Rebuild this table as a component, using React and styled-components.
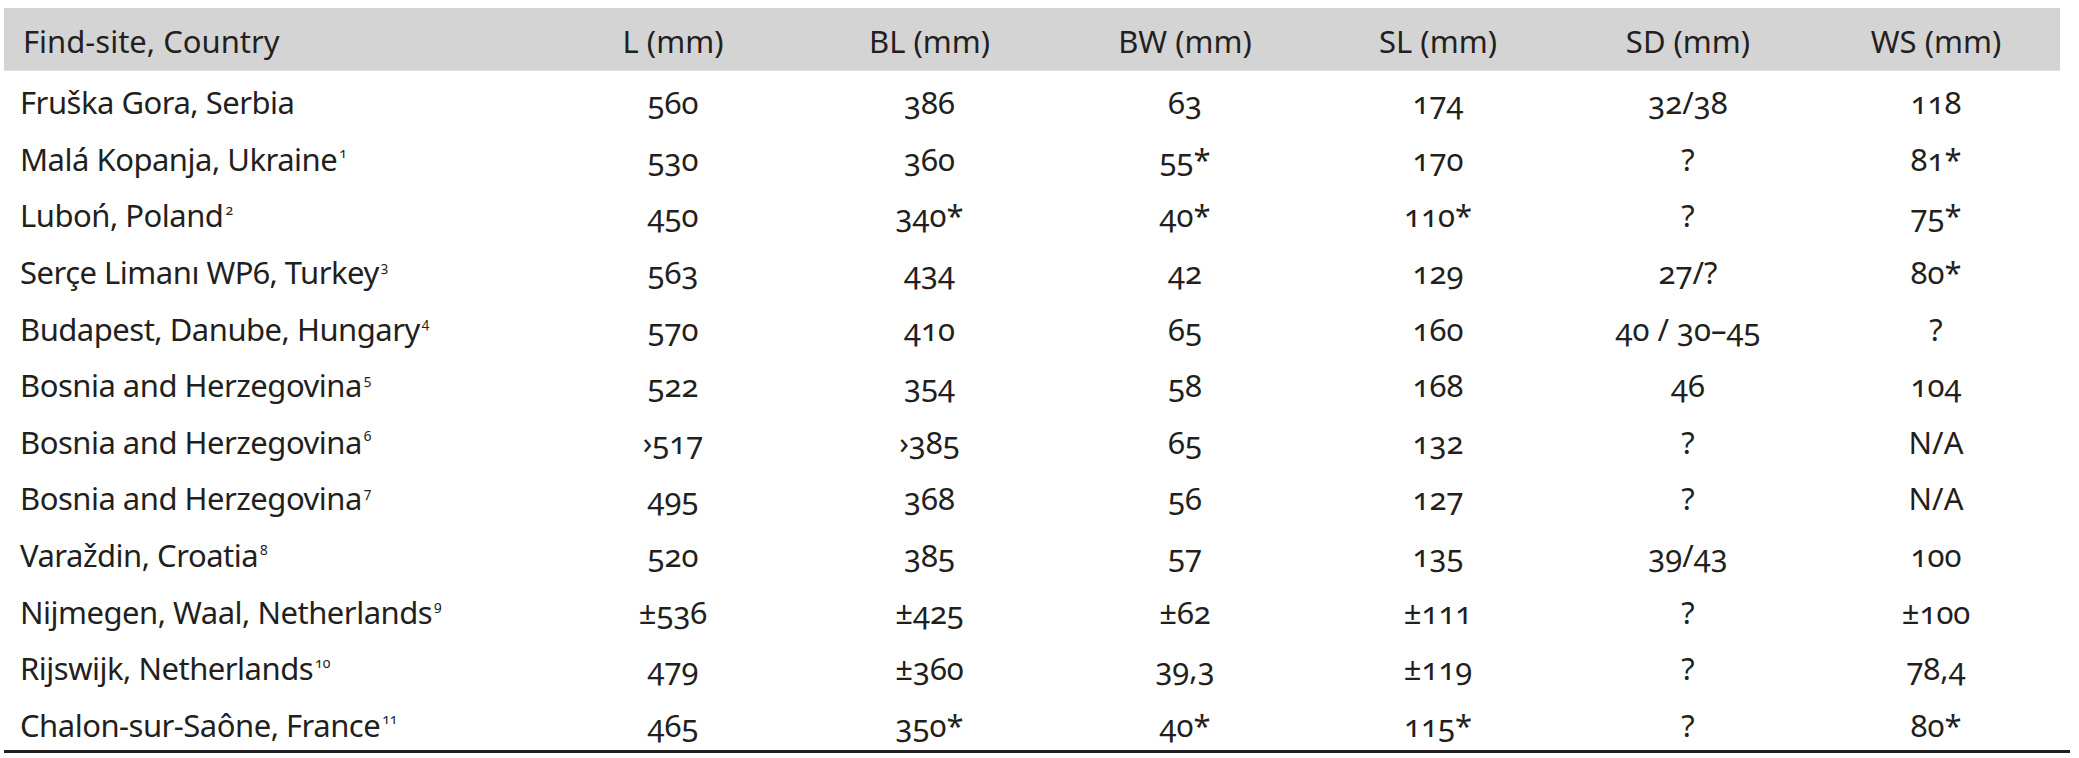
import React from "react";
import styled, { createGlobalStyle } from "styled-components";

const Global = createGlobalStyle`
  html, body { margin: 0; padding: 0; background: #ffffff; }
  body { font-family: "Noto Sans", "Lato", sans-serif; color: #231f20; }
`;

const Page = styled.div`
  padding: 8px 9px 0 4px;
  width: 2066px;
`;

const Table = styled.div`
  display: grid;
  grid-template-columns: 541px 256px 257px 254px 252px 248px 248px;
  border-bottom: 3px solid #231f20;
  font-family: "Noto Sans", "Lato", sans-serif;
  font-size: 31px;
  font-variant-numeric: oldstyle-nums;
  font-feature-settings: "onum" 1;
`;

const HeadCell = styled.div`
  height: 63px;
  display: flex;
  align-items: center;
  justify-content: ${(p) => (p.$first ? "flex-start" : "center")};
  padding-left: ${(p) => (p.$first ? "19px" : "0")};
  padding-top: 4px;
  box-sizing: border-box;
  background: #d4d4d4;
  border-bottom: 1px solid #e2e2e2;
  white-space: nowrap;
`;

const Cell = styled.div`
  height: 56.6px;
  display: flex;
  align-items: center;
  justify-content: ${(p) => (p.$first ? "flex-start" : "center")};
  padding-left: ${(p) => (p.$first ? "16px" : "0")};
  padding-top: 6px;
  box-sizing: border-box;
  letter-spacing: ${(p) => (p.$first ? "-0.5px" : "0")};
  white-space: nowrap;
`;

const Name = styled.span`
  display: inline-block;
`;

const Note = styled.sup`
  font-size: 0.45em;
  vertical-align: 0.9em;
  line-height: 0;
  letter-spacing: 0;
  margin-left: 2px;
`;

const headers = ["Find-site, Country", "L (mm)", "BL (mm)", "BW (mm)", "SL (mm)", "SD (mm)", "WS (mm)"];

const rows = [
  ["Fruška Gora, Serbia", "", "560", "386", "63", "174", "32/38", "118"],
  ["Malá Kopanja, Ukraine", "1", "530", "360", "55*", "170", "?", "81*"],
  ["Luboń, Poland", "2", "450", "340*", "40*", "110*", "?", "75*"],
  ["Serçe Limanı WP6, Turkey", "3", "563", "434", "42", "129", "27/?", "80*"],
  ["Budapest, Danube, Hungary", "4", "570", "410", "65", "160", "40 / 30–45", "?"],
  ["Bosnia and Herzegovina", "5", "522", "354", "58", "168", "46", "104"],
  ["Bosnia and Herzegovina", "6", "›517", "›385", "65", "132", "?", "N/A"],
  ["Bosnia and Herzegovina", "7", "495", "368", "56", "127", "?", "N/A"],
  ["Varaždin, Croatia", "8", "520", "385", "57", "135", "39/43", "100"],
  ["Nijmegen, Waal, Netherlands", "9", "±536", "±425", "±62", "±111", "?", "±100"],
  ["Rijswijk, Netherlands", "10", "479", "±360", "39,3", "±119", "?", "78,4"],
  ["Chalon-sur-Saône, France", "11", "465", "350*", "40*", "115*", "?", "80*"],
];

export default function App() {
  return (
    <>
      <Global />
      <Page>
        <Table>
          {headers.map((h, i) => (
            <HeadCell key={h} $first={i === 0}>{h}</HeadCell>
          ))}
          {rows.map((r, ri) => (
            <React.Fragment key={ri}>
              <Cell $first>
                <Name>
                  {r[0]}
                  {r[1] && <Note>{r[1]}</Note>}
                </Name>
              </Cell>
              {r.slice(2).map((v, ci) => (
                <Cell key={ci}>{v}</Cell>
              ))}
            </React.Fragment>
          ))}
        </Table>
      </Page>
    </>
  );
}
